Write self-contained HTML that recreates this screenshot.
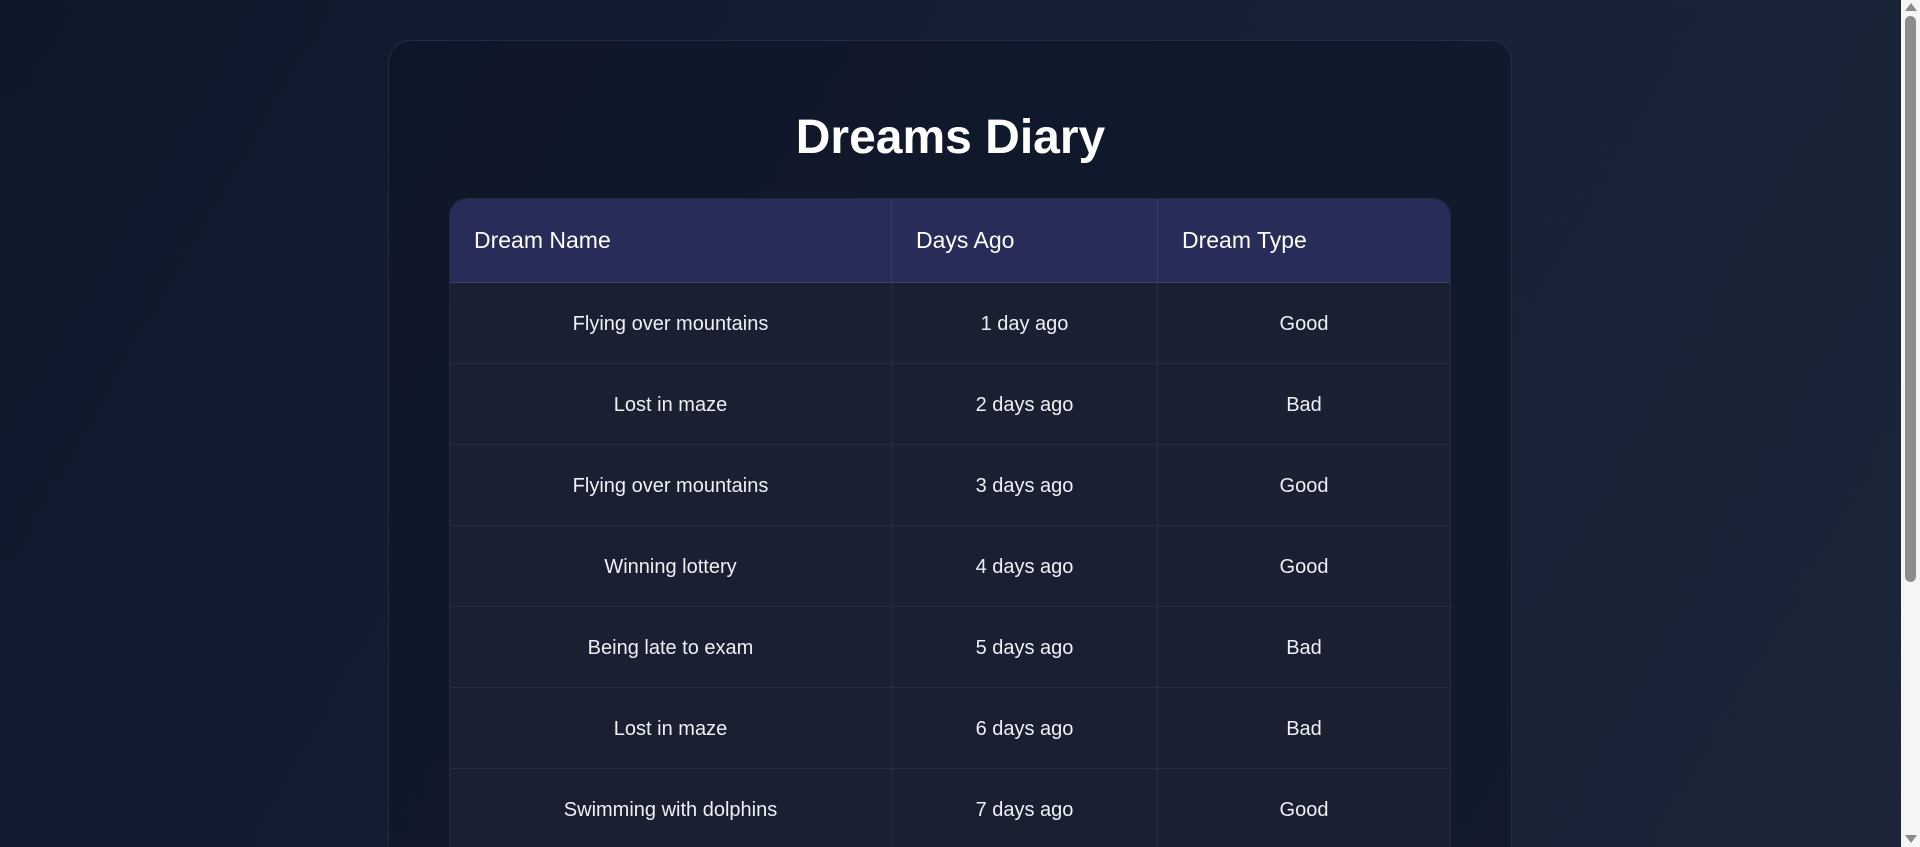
<!DOCTYPE html>
<html><head><meta charset="utf-8"><style>
html,body{margin:0;padding:0;width:1920px;height:847px;overflow:hidden}
body{background:linear-gradient(120deg,#0f172a 0%,#152036 50%,#1c2638 100%);font-family:"Liberation Sans",Arial,sans-serif;color:#fff;position:relative}
.card{position:absolute;left:388px;top:40px;width:1124px;height:900px;border:1px solid rgba(255,255,255,0.09);border-radius:22px;background:rgba(14,21,38,0.65);box-sizing:border-box}
h1{position:absolute;left:0;top:114px;margin:0;text-align:center;font-size:48px;font-weight:bold;line-height:1;color:#fff}
table{position:absolute;left:449px;top:198px;width:1002px;border-collapse:separate;border-spacing:0;border:1px solid rgba(255,255,255,0.08);border-radius:18px 18px 0 0;overflow:hidden;table-layout:fixed}
th{background:#282c58;height:84px;text-align:left;padding:0 0 0 24px;font-weight:normal;font-size:23px;border-right:1px solid rgba(255,255,255,0.07);border-bottom:1px solid rgba(255,255,255,0.1);box-sizing:border-box}
td{background:#1a1f32;height:81px;text-align:center;font-size:20px;color:#eef0f5;border-right:1px solid rgba(255,255,255,0.06);border-bottom:1px solid rgba(255,255,255,0.06);box-sizing:border-box;padding-top:3px}
th:last-child,td:last-child{border-right:none}
.sb{position:absolute;right:0;top:0;width:19px;height:847px;background:#f5f5f5}
.thumb{position:absolute;left:4px;top:16px;width:11px;height:566px;background:#8c8c8c;border-radius:6px}
.up,.dn{position:absolute;left:4px;width:0;height:0;border-left:6px solid transparent;border-right:6px solid transparent}
.up{top:3px;border-bottom:8px solid #8a8a8a}
.dn{bottom:4px;border-top:8px solid #8a8a8a}
</style></head><body>
<div class="card"></div>
<h1 style="width:1901px">Dreams Diary</h1>
<table>
<colgroup><col style="width:442px"><col style="width:266px"><col></colgroup>
<tr><th>Dream Name</th><th>Days Ago</th><th>Dream Type</th></tr>
<tr><td>Flying over mountains</td><td>1 day ago</td><td>Good</td></tr>
<tr><td>Lost in maze</td><td>2 days ago</td><td>Bad</td></tr>
<tr><td>Flying over mountains</td><td>3 days ago</td><td>Good</td></tr>
<tr><td>Winning lottery</td><td>4 days ago</td><td>Good</td></tr>
<tr><td>Being late to exam</td><td>5 days ago</td><td>Bad</td></tr>
<tr><td>Lost in maze</td><td>6 days ago</td><td>Bad</td></tr>
<tr><td>Swimming with dolphins</td><td>7 days ago</td><td>Good</td></tr>
<tr><td>Being late to exam</td><td>8 days ago</td><td>Bad</td></tr>
</table>
<div class="sb"><div class="up"></div><div class="thumb"></div><div class="dn"></div></div>
</body></html>
